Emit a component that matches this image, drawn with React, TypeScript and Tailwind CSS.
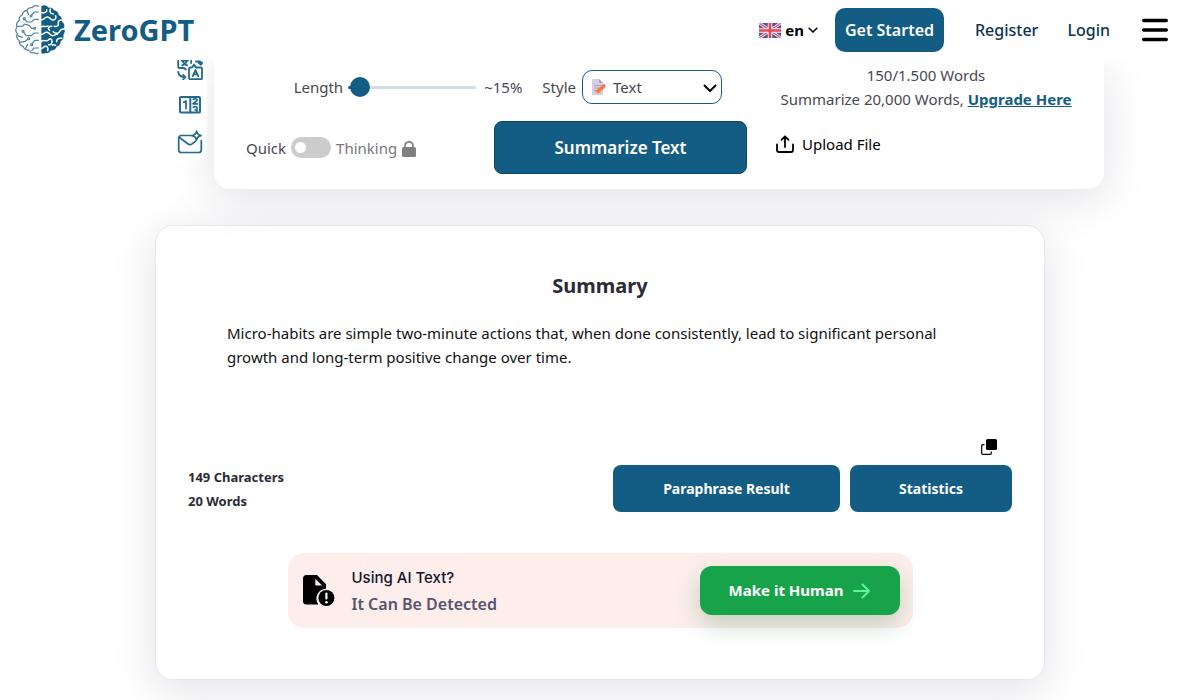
import React from "react";

function BrainLogo() {
  return (
    <svg viewBox="0 0 150 150" className="size-[50px] shrink-0" fill="none" aria-hidden="true">
      <g stroke="#4d84a3" strokeWidth="3.600" strokeLinecap="round" strokeLinejoin="round">
        <path d="M70 4c-7-3-14-2-18 4-7-1-13 2-16 8-8 1-13 6-14 13-7 4-11 10-9 17-7 5-10 13-7 20-5 7-4 15 1 20-4 9-1 17 6 21-1 9 4 15 11 17 3 8 9 12 17 11 4 7 10 10 17 8 4 4 8 4 12 1" />
        <path d="M70 21H58l-8 9M36 17l5 12M70 43H58l-9 8H36l-7-8M8 64h14l7-7 13 4 8 9h6M70 84H58l-9 8H34l-8-10M8 92l14 5M14 112l16-3 8-6M70 106H59l-8 10M32 130l6-12M50 137l7-8h13" />
        <circle cx="48" cy="33" r="3" fill="#fff" />
        <circle cx="28" cy="41" r="3" fill="#fff" />
        <circle cx="59" cy="70" r="3" fill="#fff" />
        <circle cx="24" cy="79" r="3" fill="#fff" />
        <circle cx="41" cy="101" r="3" fill="#fff" />
        <circle cx="50" cy="119" r="3" fill="#fff" />
      </g>
      <path
        d="M79 3c8-4 16-2 21 5 8-2 14 2 17 8 8 1 13 6 14 14 8 4 11 11 9 18 7 6 10 13 7 20 4 8 3 15-2 21 2 9-1 16-8 20 0 9-5 15-12 16-3 8-9 12-17 11-5 8-11 10-17 8-4 3-8 3-12 1z"
        fill="#135d84"
      />
      <g stroke="#fff" strokeWidth="4.500" strokeLinecap="round" strokeLinejoin="round">
        <path d="M78 23h9c6 0 9-4 8-9M106 12c-2 9-1 14 9 15M78 44c12 2 10-10 20-8s8 10 17 9 8-8 7-13M140 45c-8 0-11 5-10 11s-5 10-12 8M78 66c9-6 15 2 21-3M104 76c-7-5-3-13 6-12M148 72c-10-2-13 4-15 9s-13 5-18-1M78 88c9 2 10-9 19-6s8 10 16 10 9-6 14-4M140 100c-9-2-16 3-15 10M78 110c9-8 15 2 22-5s11-2 11 5-4 10-10 9M78 131c6 0 8-8 14-7s8 6 6 13M122 121c-5-2-7-3-10 0" />
      </g>
    </svg>
  );
}

function Flag() {
  return (
    <svg viewBox="0 0 44 30" className="h-[15px] w-[22px]" aria-hidden="true">
      <defs>
        <clipPath id="flag">
          <rect width="44" height="30" rx="3" />
        </clipPath>
      </defs>
      <g clipPath="url(#flag)">
        <rect width="44" height="30" fill="#4a5598" />
        <path d="M0 0l44 30M44 0L0 30" stroke="#f3eef5" strokeWidth="6" />
        <path d="M0 0l44 30M44 0L0 30" stroke="#e2475c" strokeWidth="2.400" />
        <path d="M22 0v30M0 15h44" stroke="#f8f2f6" strokeWidth="9" />
        <path d="M22 0v30M0 15h44" stroke="#e2475c" strokeWidth="5.400" />
      </g>
    </svg>
  );
}

function TranslateIcon() {
  return (
    <svg viewBox="0 0 26 26" className="size-[26px]" fill="none" stroke="#226a90" strokeWidth="1.800" strokeLinecap="round" strokeLinejoin="round" aria-hidden="true">
      <path d="M9 15.500l-2-1.500H2.500a1.300 1.300 0 0 1-1.300-1.300V3.500a1.300 1.300 0 0 1 1.300-1.300h10.400a1.300 1.300 0 0 1 1.300 1.300V9" />
      <path d="M4.500 6.500h6.500M7.700 4.500v2M10 6.500c-.6 2.400-2.400 4-4.800 4.900M5.400 6.500c.7 2.300 2.500 4 4.800 4.900" />
      <path d="M13.300 13.500h1.800l2-3 1.700 3h4.900a1.300 1.300 0 0 1 1.300 1.300v9.100a1.300 1.300 0 0 1-1.300 1.300H13.300a1.300 1.300 0 0 1-1.300-1.300v-9.100a1.300 1.300 0 0 1 1.300-1.300z" fill="#fff" />
      <path d="M15.700 22.200l2.800-6.200 2.800 6.200M16.600 20.400h3.800" />
      <path d="M1.200 18c.6 3.200 2.600 5.200 6.800 5.200M6.200 21l2.200 2.200-2.200 2.200M19 7.500h3.500A1.500 1.500 0 0 1 24 9v1M21.500 8.800l2.500 2 1.300-2" />
    </svg>
  );
}

function CounterIcon() {
  return (
    <svg viewBox="0 0 26 26" className="size-[26px]" fill="none" stroke="#226a90" strokeWidth="1.700" strokeLinecap="round" strokeLinejoin="round" aria-hidden="true">
      <rect x="3" y="5" width="20" height="15.400" rx="1" strokeWidth="2" />
      <path d="M13.300 5v15.400" strokeWidth="2" />
      <path d="M6.800 10.200l2.200-1.300v7.700" />
      <path d="M16.300 7.300c1.500-1 3.900-.6 3.800.8-.1 1.200-2.500 2-4 3.700h4.400M16.300 15.300c1.700-1.200 4-.6 3.900 1-.1 1-.8 1.500-2 1.500 1.100 0 2 .8 2 2" />
    </svg>
  );
}

function MailIcon() {
  return (
    <svg viewBox="0 0 26 26" className="size-[26px]" fill="none" stroke="#226a90" strokeWidth="1.700" strokeLinecap="round" strokeLinejoin="round" aria-hidden="true">
      <path d="M14 5.500H4.300a2.600 2.600 0 0 0-2.600 2.600v11.800a2.600 2.600 0 0 0 2.600 2.600h17.400a2.600 2.600 0 0 0 2.600-2.600V10.500" />
      <path d="M2.500 7.500l8.300 6.300c1.300 1 3 1 4.300 0l3.400-2.600" />
      <path d="M19.500 1.200c.5 2.900 1.400 3.900 4.500 4.500-3.100.6-4 1.600-4.500 4.500-.5-2.900-1.400-3.900-4.500-4.500 3.100-.6 4-1.600 4.500-4.500z" />
    </svg>
  );
}

function MemoIcon() {
  return (
    <svg viewBox="0 0 16 16" className="pointer-events-none absolute left-[9px] top-[9px] size-4" aria-hidden="true">
      <path d="M1 1.200A1.200 1.200 0 0 1 2.200 0H8l4 4v10.800a1.200 1.200 0 0 1-1.200 1.200H2.200A1.200 1.200 0 0 1 1 14.800z" fill="#d5cfdd" />
      <path d="M8 0l4 4H9a1 1 0 0 1-1-1z" fill="#a79fb4" />
      <path d="M3 6.500h7M3 9h6M3 11.500h3" stroke="#a79fb4" strokeWidth=".9" />
      <path d="M4.600 12l6.600-6 2.500 2.800-6.600 5.800-3.400.5z" fill="#f4793f" />
      <path d="M11.200 6l.9-.8c.9-.7 3.100 1.500 2.300 2.700l-.7.900z" fill="#f0597a" />
      <path d="M4.600 12l2.500 2.600-3.400.5z" fill="#f9c29b" />
    </svg>
  );
}

function FileAlertIcon() {
  return (
    <svg viewBox="0 0 32 32" className="size-8 shrink-0" aria-hidden="true">
      <path d="M3.500 0H14l9 9.200v4.600a9.800 9.800 0 0 0-7.600 15.700H3.500A3.500 3.500 0 0 1 0 26V3.500A3.500 3.500 0 0 1 3.500 0z" fill="#000" />
      <path d="M12.300 3.800v6.700h6.800z" fill="#fdeeeb" />
      <circle cx="23.400" cy="23" r="8" fill="#000" />
      <path d="M23.400 18.500v5" stroke="#fff" strokeWidth="2.200" strokeLinecap="round" />
      <circle cx="23.400" cy="27.200" r="1.300" fill="#fff" />
    </svg>
  );
}

function Header() {
  return (
    <header className="relative z-10 flex h-[60px] items-center justify-between bg-white pl-[15px] pr-8">
      <a href="#home" className="flex items-center gap-[9px] text-[29px] font-bold leading-8 text-[#135d84]">
        <BrainLogo />
        ZeroGPT
      </a>
      <nav className="flex items-center text-[16px] font-semibold text-[#0c3550]">
        <button type="button" className="mr-[17px] flex items-center gap-1 text-[15px] font-bold text-black">
          <Flag />
          en
          <svg viewBox="0 0 10 6" className="h-[6px] w-[10px]" fill="none" stroke="currentColor" strokeWidth="1.500" aria-hidden="true">
            <path d="M.7.700L5 5 9.300.700" />
          </svg>
        </button>
        <a href="#start" className="mr-[31px] flex h-11 w-[109px] items-center justify-center whitespace-nowrap rounded-[10px] bg-[#135d84] text-white">
          Get Started
        </a>
        <a href="#register" className="mr-[29px] font-medium">Register</a>
        <a href="#login" className="mr-8 font-medium">Login</a>
        <button type="button" aria-label="Menu">
          <svg viewBox="0 0 26 24" className="h-6 w-[26px]" stroke="#000" strokeWidth="3.400" strokeLinecap="round" aria-hidden="true">
            <path d="M1.700 2.500h22.600M1.700 12h22.600M1.700 21.500h22.600" />
          </svg>
        </button>
      </nav>
    </header>
  );
}

function SideTools() {
  return (
    <aside className="z-[1] ml-[17px] mr-[7px] h-[102px] w-[34px] shrink-0 rounded-br-2xl bg-white">
      <div className="-mt-[6px] flex flex-col items-center gap-3">
        <a href="#translate" aria-label="Translate"><TranslateIcon /></a>
        <a href="#counter" aria-label="Word counter"><CounterIcon /></a>
        <a href="#email" aria-label="Email helper"><MailIcon /></a>
      </div>
    </aside>
  );
}

function Controls() {
  return (
    <section className="flex min-w-0 flex-1 justify-between rounded-b-2xl bg-white pb-[15px] pl-8 pr-7 text-[15px] leading-6 text-[#484850] shadow-[0_10px_45px_rgba(30,30,70,0.13)]">
      <div className="w-[501px] pt-[10px]">
        <div className="flex h-[34px] items-center justify-end pr-[25px]">
          <label htmlFor="length">Length</label>
          <input
            id="length"
            type="range"
            min={14}
            max={64}
            defaultValue={15}
            className="ml-[5px] mr-2 h-[3px] w-32 appearance-none rounded-full bg-[#cfdde6] bg-[linear-gradient(#135d84,#135d84)] bg-[length:8px_3px] bg-no-repeat [&::-webkit-slider-thumb]:size-5 [&::-webkit-slider-thumb]:appearance-none [&::-webkit-slider-thumb]:rounded-full [&::-webkit-slider-thumb]:bg-[#135d84]"
          />
          <output htmlFor="length" className="mr-5">~15%</output>
          <label htmlFor="style">Style</label>
          <span className="relative ml-[6px]">
            <select id="style" className="block h-[34px] w-[140px] appearance-none rounded-[10px] border border-[#135d84] bg-white pl-[30px]">
              <option>Text</option>
            </select>
            <MemoIcon />
            <svg viewBox="0 0 14 8" className="pointer-events-none absolute right-[5px] top-[14px] h-2 w-[14px]" fill="none" stroke="#000" strokeWidth="2" aria-hidden="true">
              <path d="M1 1l6 6 6-6" />
            </svg>
          </span>
        </div>
        <div className="mt-[17px] flex h-[53px] items-center justify-between">
          <div className="flex items-center gap-[5px]">
            <label htmlFor="mode">Quick</label>
            <input
              id="mode"
              type="checkbox"
              className="relative h-[21px] w-10 appearance-none rounded-full bg-[#ccc] before:absolute before:left-1 before:top-[5px] before:size-[11px] before:rounded-full before:bg-white"
            />
            <label htmlFor="mode" className="text-[#77777c]">Thinking</label>
            <svg viewBox="0 0 14 16" className="mt-[2px] h-4 w-[14px]" aria-hidden="true">
              <rect y="6" width="14" height="10" rx="1.500" fill="#808080" />
              <path d="M3 7V4.800a4 4 0 0 1 8 0V7" fill="none" stroke="#808080" strokeWidth="1.700" />
            </svg>
          </div>
          <button type="button" className="h-[53px] w-[253px] rounded-lg border border-[#0c4463] bg-[#135d84] text-[17px] font-semibold text-white">
            Summarize Text
          </button>
        </div>
      </div>
      <div className="flex w-[300px] flex-col pt-[3px]">
        <p className="whitespace-nowrap text-center">
          150/1.500 Words
          <br />
          Summarize 20,000 Words,{" "}
          <a href="#upgrade" className="font-bold text-[#135d84] underline">Upgrade Here</a>
        </p>
        <button type="button" className="mt-[21px] flex items-center gap-2 text-black">
          <svg viewBox="0 0 18 18" className="size-[18px]" fill="none" stroke="#000" strokeWidth="1.800" strokeLinecap="round" strokeLinejoin="round" aria-hidden="true">
            <path d="M1 9.500V15a2 2 0 0 0 2 2h12a2 2 0 0 0 2-2V9.500M9 12V1.500M5.500 4.800L9 1.300l3.500 3.500" />
          </svg>
          Upload File
        </button>
      </div>
    </section>
  );
}

function HumanizeBanner() {
  return (
    <div className="mx-auto mt-[41px] flex h-[75px] w-[625px] items-center rounded-2xl bg-[#fdeeeb] pl-[15px] pr-[13px]">
      <FileAlertIcon />
      <div className="ml-[17px] flex-1">
        <p className="font-[Inter] text-[15px] font-medium leading-[26px] text-[#14142b]">Using AI Text?</p>
        <p className="text-[16px] font-semibold leading-[26px] text-[#55556f]">It Can Be Detected</p>
      </div>
      <button type="button" className="flex h-[49px] w-[200px] items-center justify-center gap-[10px] rounded-xl bg-[#16a34a] text-[15px] font-bold text-white shadow-[0_10px_24px_rgba(22,120,60,0.25)]">
        Make it Human
        <svg viewBox="0 0 17 16" className="h-4 w-[17px]" fill="none" stroke="#5ff5a0" strokeWidth="1.800" strokeLinecap="round" strokeLinejoin="round" aria-hidden="true">
          <path d="M1 8h15M9.500 1.500L16 8l-6.500 6.500" />
        </svg>
      </button>
    </div>
  );
}

function Summary() {
  return (
    <section className="mx-auto mt-9 w-full max-w-[890px] rounded-[18px] border border-[#e6e6f1] bg-white px-8 pb-[51px] pt-[44px] shadow-[0_10px_45px_rgba(30,30,70,0.13)]">
      <h2 className="text-center text-[20px] font-bold leading-8 text-[#2b2b36]">Summary</h2>
      <p className="mx-[39px] mt-[19px] h-[118px] text-[15px] leading-6 text-[#111]">
        Micro-habits are simple two-minute actions that, when done consistently, lead to significant personal growth and long-term positive change over time.
      </p>
      <div className="flex justify-end pr-[15px]">
        <button type="button" aria-label="Copy">
          <svg viewBox="0 0 16 16" className="block size-4" aria-hidden="true">
            <path d="M3.500 5.700H1.700a1 1 0 0 0-1 1v7.600a1 1 0 0 0 1 1h7.600a1 1 0 0 0 1-1v-1.800" fill="none" stroke="#000" strokeWidth="1.200" />
            <rect x="5" width="11" height="11" rx="1.500" fill="#000" />
          </svg>
        </button>
      </div>
      <div className="mt-[10px] flex h-[47px] items-center gap-[10px] text-[14px] font-bold">
        <p className="flex-1 text-[13px] leading-6 text-[#2b2b36]">
          149 Characters
          <br />
          20 Words
        </p>
        <button type="button" className="h-[47px] w-[227px] rounded-lg bg-[#135d84] text-white">Paraphrase Result</button>
        <button type="button" className="h-[47px] w-[162px] rounded-lg bg-[#135d84] text-white">Statistics</button>
      </div>
      <HumanizeBanner />
    </section>
  );
}

export default function App() {
  return (
    <div className="min-h-screen overflow-x-hidden bg-white font-['Noto_Sans','Open_Sans',sans-serif]">
      <Header />
      <main className="pb-5">
        <div className="flex pl-[13%] pr-[8%]">
          <SideTools />
          <Controls />
        </div>
        <Summary />
      </main>
    </div>
  );
}
